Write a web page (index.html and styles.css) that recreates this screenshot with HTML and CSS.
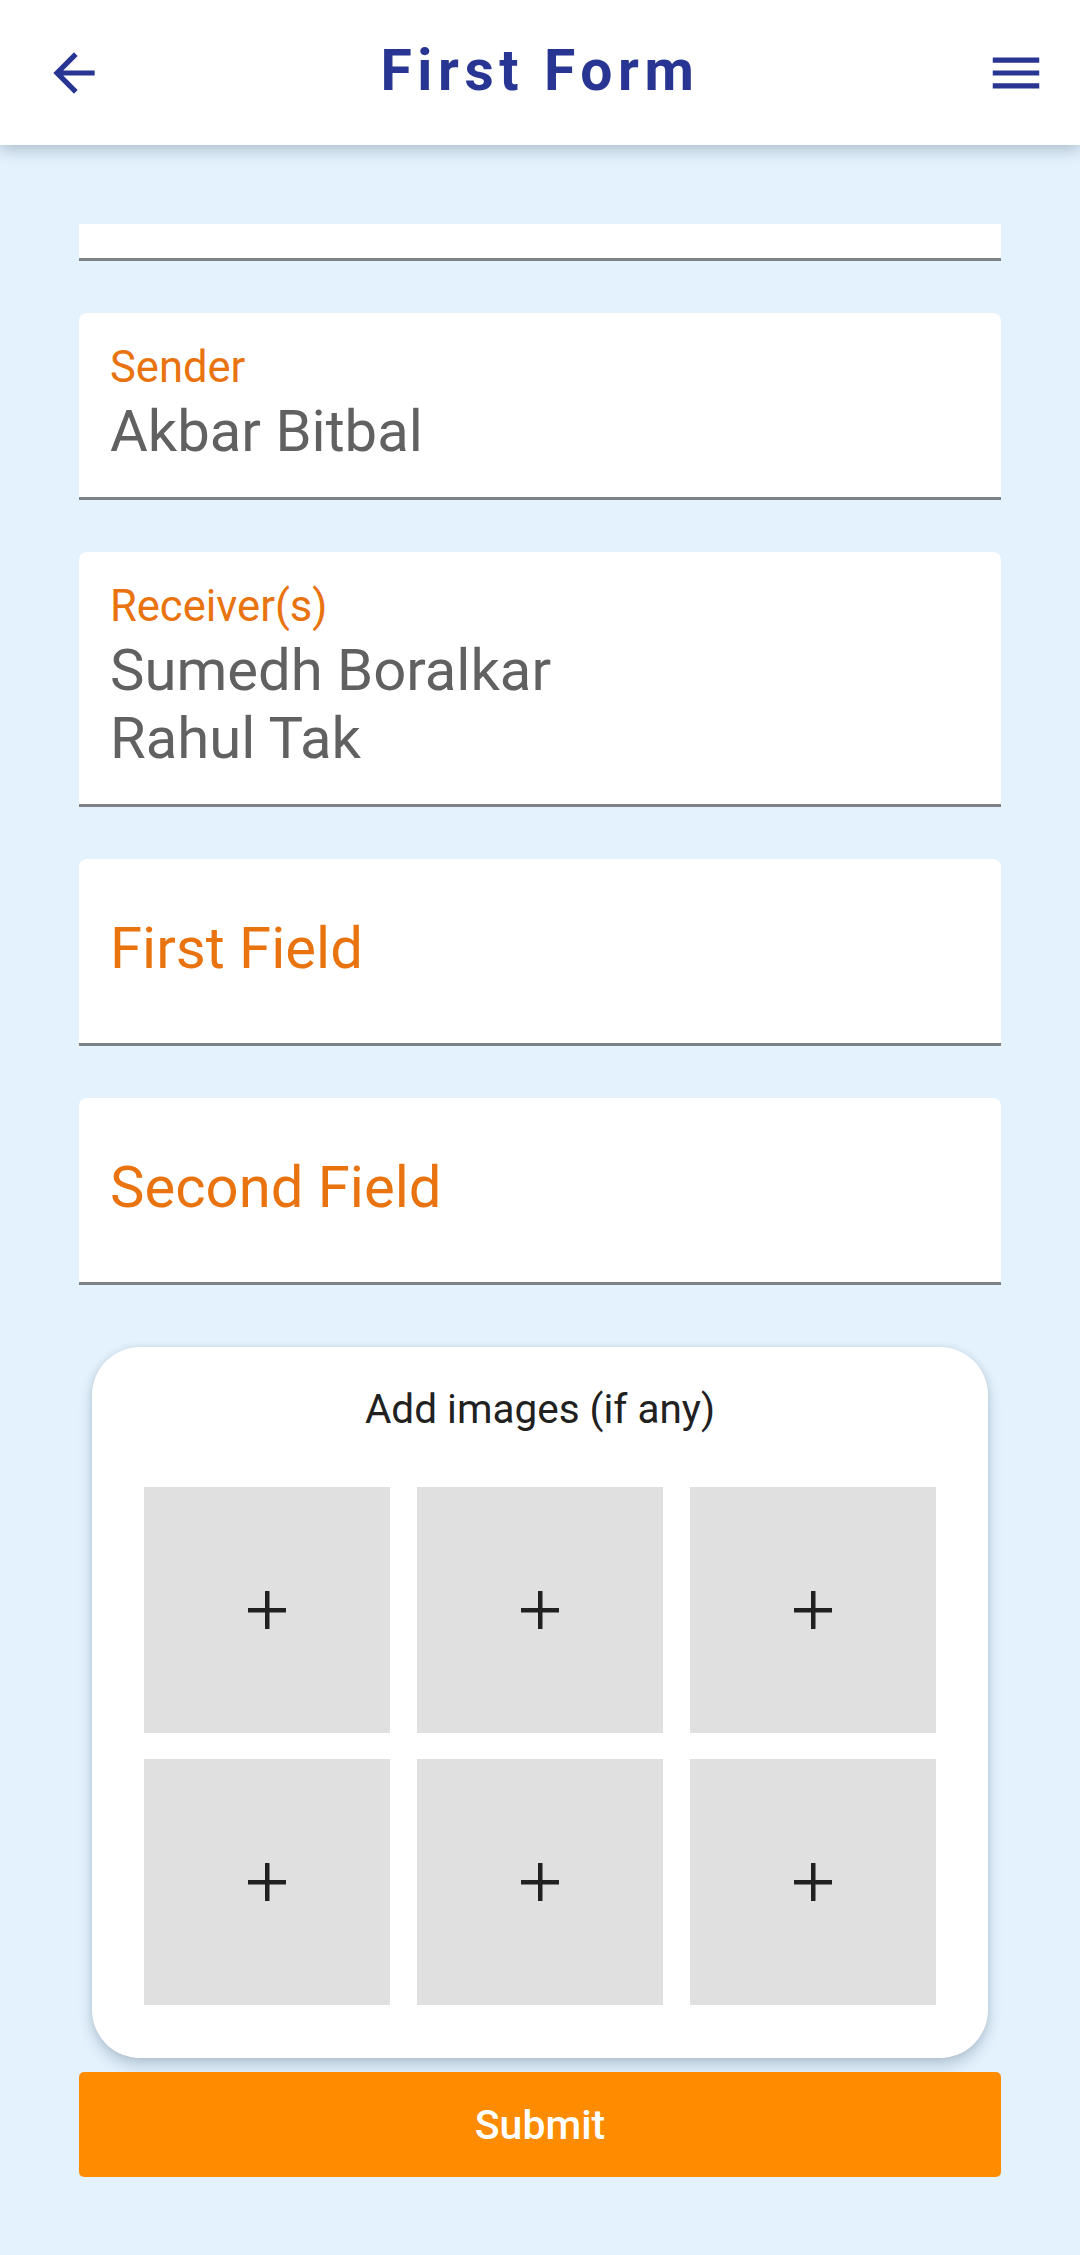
FILE: index.html
```html
<!DOCTYPE html>
<html lang="en">
<head>
<meta charset="utf-8">
<title>First Form</title>
<link rel="stylesheet" href="styles.css">
</head>
<body>
<header class="appbar">
  <svg class="icon icon-back" viewBox="0 0 24 24" aria-hidden="true"><path d="M20 11H7.83l5.59-5.59L12 4l-8 8 8 8 1.41-1.41L7.83 13H20v-2z"/></svg>
  <h1 class="title">First Form</h1>
  <svg class="icon icon-menu" viewBox="0 0 24 24" aria-hidden="true"><path d="M3 18h18v-2H3v2zm0-5h18v-2H3v2zm0-7v2h18V6H3z"/></svg>
</header>
<main class="content">
  <div class="fields">
    <div class="field field-partial"></div>
    <div class="field">
      <div class="label">Sender</div>
      <div class="value">Akbar Bitbal</div>
    </div>
    <div class="field">
      <div class="label">Receiver(s)</div>
      <div class="value">Sumedh Boralkar<br>Rahul Tak</div>
    </div>
    <div class="field field-empty">
      <div class="placeholder">First Field</div>
    </div>
    <div class="field field-empty">
      <div class="placeholder">Second Field</div>
    </div>
  </div>
  <section class="images-card">
    <div class="images-title">Add images (if any)</div>
    <div class="tiles">
      <div class="tile"><span class="plus"></span></div>
      <div class="tile"><span class="plus"></span></div>
      <div class="tile"><span class="plus"></span></div>
      <div class="tile"><span class="plus"></span></div>
      <div class="tile"><span class="plus"></span></div>
      <div class="tile"><span class="plus"></span></div>
    </div>
  </section>
  <button class="submit" type="button">Submit</button>
</main>
</body>
</html>
```

FILE: styles.css
```css
html {
  background: #E3F2FD;
}
body {
  margin: 0;
  background: #E3F2FD;
  font-family: Roboto, "Noto Sans", "Liberation Sans", sans-serif;
  min-height: 2255px;
}
.appbar {
  height: 145px;
  background: #ffffff;
  display: grid;
  grid-template-columns: 1fr auto 1fr;
  align-items: center;
  padding: 0 33px;
  box-shadow: 0 5px 14px rgba(40, 60, 80, 0.28);
  position: relative;
  z-index: 2;
}
.icon {
  width: 62px;
  height: 62px;
  fill: #283593;
  display: block;
}
.icon-back {
  justify-self: start;
  margin-left: 10px;
}
.icon-menu {
  justify-self: end;
}
.title {
  margin: 0 0 5px;
  font-size: 57px;
  font-weight: 700;
  letter-spacing: 5.6px;
  color: #283593;
  line-height: 1;
}
.content {
  padding: 79px 79px 0;
}
.fields {
  display: flex;
  flex-direction: column;
  gap: 52px;
}
.field {
  background: #ffffff;
  border-bottom: 3px solid #7d8287;
  border-radius: 8px 8px 0 0;
  padding: 29px 31px 32px;
}
.field-partial {
  height: 37px;
  padding: 0;
  border-radius: 0;
  box-sizing: border-box;
}
.label {
  font-size: 43.5px;
  line-height: 52px;
  color: #E8730F;
}
.value {
  margin-top: 3px;
  font-size: 58px;
  line-height: 68px;
  color: #616161;
}
.field-empty {
  padding: 55px 31px 61px;
}
.placeholder {
  font-size: 58px;
  line-height: 68px;
  color: #E8730F;
}
.images-card {
  margin: 62px 13px 0;
  background: #ffffff;
  border-radius: 48px;
  padding: 38px 52px 53px;
  box-shadow: 0 8px 14px rgba(40, 60, 80, 0.22), 0 0 6px rgba(40, 60, 80, 0.10);
}
.images-title {
  text-align: center;
  font-size: 40.5px;
  line-height: 48px;
  color: #212121;
  margin-bottom: 54px;
}
.tiles {
  display: grid;
  grid-template-columns: repeat(3, 246px);
  column-gap: 27px;
  row-gap: 26px;
}
.tile {
  height: 246px;
  background: #E0E0E0;
  display: flex;
  align-items: center;
  justify-content: center;
}
.plus {
  width: 38px;
  height: 38px;
  display: block;
  background:
    linear-gradient(#212121, #212121) center / 38px 4.5px no-repeat,
    linear-gradient(#212121, #212121) center / 4.5px 38px no-repeat;
}
.submit {
  display: flex;
  align-items: center;
  justify-content: center;
  width: 100%;
  height: 105px;
  margin-top: 14px;
  border: none;
  border-radius: 5px;
  background: #FF8C00;
  color: #ffffff;
  font-family: Roboto, "Noto Sans", "Liberation Sans", sans-serif;
  font-size: 41px;
  font-weight: 500;
  padding: 0;
}
```
